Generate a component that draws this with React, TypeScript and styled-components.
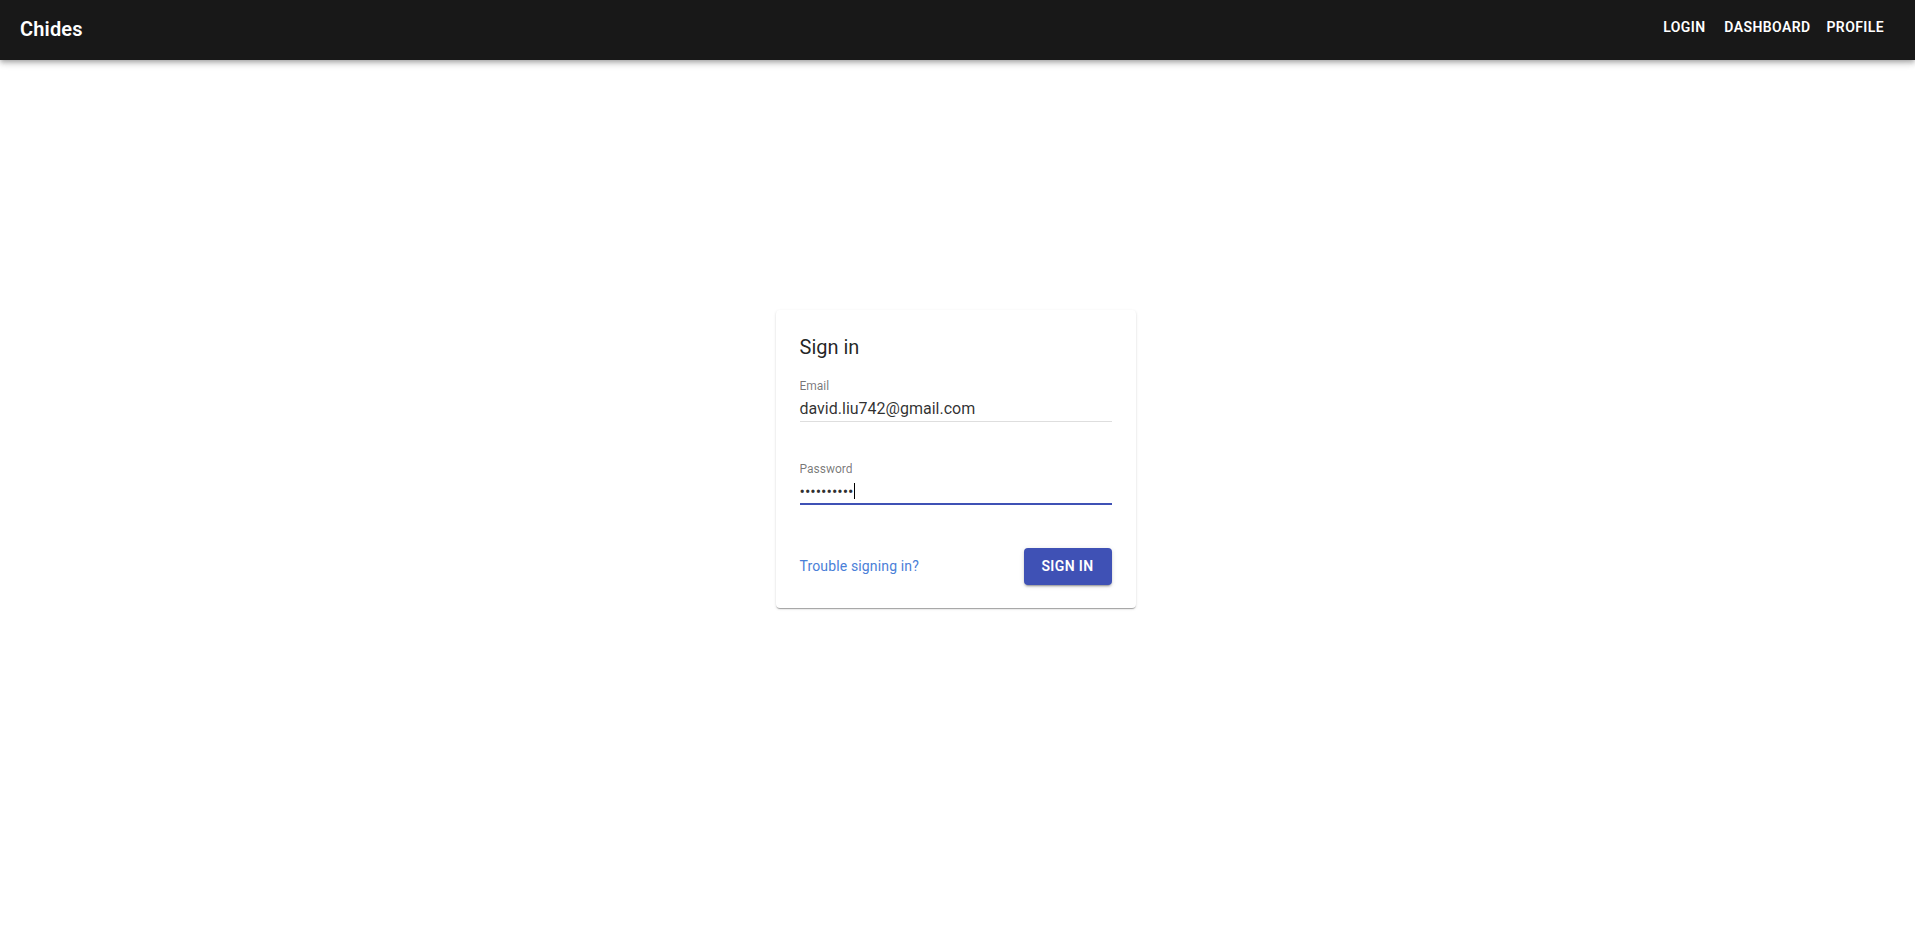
import React from "react";
import styled, { createGlobalStyle } from "styled-components";

const GlobalStyle = createGlobalStyle`
  html, body {
    margin: 0;
    padding: 0;
    background: #ffffff;
    font-family: Roboto, "Helvetica Neue", Arial, sans-serif;
    -webkit-font-smoothing: antialiased;
  }
  * { box-sizing: border-box; }
`;

const Page = styled.div`
  min-height: 929px;
  display: flex;
  flex-direction: column;
`;

const Header = styled.header`
  height: 60px;
  background: #181818;
  color: #ffffff;
  display: flex;
  align-items: center;
  justify-content: space-between;
  padding: 0 23px 4px 20px;
  box-shadow: 0px 2px 4px -1px rgba(0, 0, 0, 0.2),
    0px 4px 5px 0px rgba(0, 0, 0, 0.14), 0px 1px 10px 0px rgba(0, 0, 0, 0.12);
  position: relative;
  z-index: 2;
`;

const Brand = styled.div`
  font-size: 20px;
  font-weight: 600;
  line-height: 32px;
  margin-top: 2px;
  letter-spacing: 0.0075em;
`;

const Nav = styled.nav`
  display: flex;
  align-items: center;
`;

const NavButton = styled.a`
  min-width: 64px;
  padding: 6px 8px;
  font-size: 14px;
  font-weight: 600;
  line-height: 1.75;
  letter-spacing: 0.02857em;
  text-transform: uppercase;
  color: #ffffff;
  text-decoration: none;
  text-align: center;
  border-radius: 4px;
  margin-top: -1px;
  cursor: pointer;
`;

const Main = styled.main`
  flex: 1;
  display: flex;
  justify-content: center;
  align-items: flex-start;
  padding-top: 250px;
  padding-right: 4px;
`;

const Card = styled.section`
  width: 360px;
  background: #ffffff;
  border-radius: 4px;
  padding: 24px 24px 23px;
  display: flex;
  flex-direction: column;
  box-shadow: 0px 2px 1px -1px rgba(0, 0, 0, 0.2),
    0px 1px 1px 0px rgba(0, 0, 0, 0.14), 0px 1px 3px 0px rgba(0, 0, 0, 0.12);
`;

const Title = styled.h2`
  margin: 0 0 19px;
  font-size: 20px;
  font-weight: 400;
  line-height: 26px;
  color: rgba(0, 0, 0, 0.87);
`;

const Fields = styled.div`
  display: flex;
  flex-direction: column;
  gap: 40px;
`;

const Field = styled.div`
  display: flex;
  flex-direction: column;
`;

const Label = styled.label`
  font-size: 12px;
  line-height: 14px;
  color: rgba(0, 0, 0, 0.54);
  margin-bottom: 6px;
`;

const Value = styled.div<{ $focused?: boolean }>`
  font-size: 16px;
  line-height: 19px;
  color: rgba(0, 0, 0, 0.82);
  padding-bottom: ${(p) => (p.$focused ? "2px" : "3px")};
  border-bottom: ${(p) =>
    p.$focused ? "2px solid #3f51b5" : "1px solid #dedede"};
  white-space: nowrap;
`;

const Caret = styled.span`
  display: inline-block;
  width: 1px;
  height: 16px;
  background: #000000;
  vertical-align: -2px;
  margin-left: 1px;
`;

const Actions = styled.div`
  margin-top: 43px;
  display: flex;
  align-items: center;
  justify-content: space-between;
`;

const HelpLink = styled.a`
  font-size: 14px;
  line-height: 20px;
  letter-spacing: 0.01em;
  color: #4a80d8;
  text-decoration: none;
  cursor: pointer;
`;

const PrimaryButton = styled.button`
  width: 88px;
  padding: 6px 16px;
  border: none;
  border-radius: 4px;
  background: #3f51b5;
  color: #ffffff;
  font-family: inherit;
  font-size: 14px;
  font-weight: 600;
  line-height: 1.75;
  letter-spacing: 0.02857em;
  text-transform: uppercase;
  cursor: pointer;
  box-shadow: 0px 3px 1px -2px rgba(0, 0, 0, 0.2),
    0px 2px 2px 0px rgba(0, 0, 0, 0.14), 0px 1px 5px 0px rgba(0, 0, 0, 0.12);
`;

export default function App() {
  return (
    <Page>
      <GlobalStyle />
      <Header>
        <Brand>Chides</Brand>
        <Nav>
          <NavButton>Login</NavButton>
          <NavButton>Dashboard</NavButton>
          <NavButton>Profile</NavButton>
        </Nav>
      </Header>
      <Main>
        <Card>
          <Title>Sign in</Title>
          <Fields>
            <Field>
              <Label>Email</Label>
              <Value>david.liu742@gmail.com</Value>
            </Field>
            <Field>
              <Label>Password</Label>
              <Value $focused>
                ••••••••••
                <Caret />
              </Value>
            </Field>
          </Fields>
          <Actions>
            <HelpLink>Trouble signing in?</HelpLink>
            <PrimaryButton>Sign in</PrimaryButton>
          </Actions>
        </Card>
      </Main>
    </Page>
  );
}
